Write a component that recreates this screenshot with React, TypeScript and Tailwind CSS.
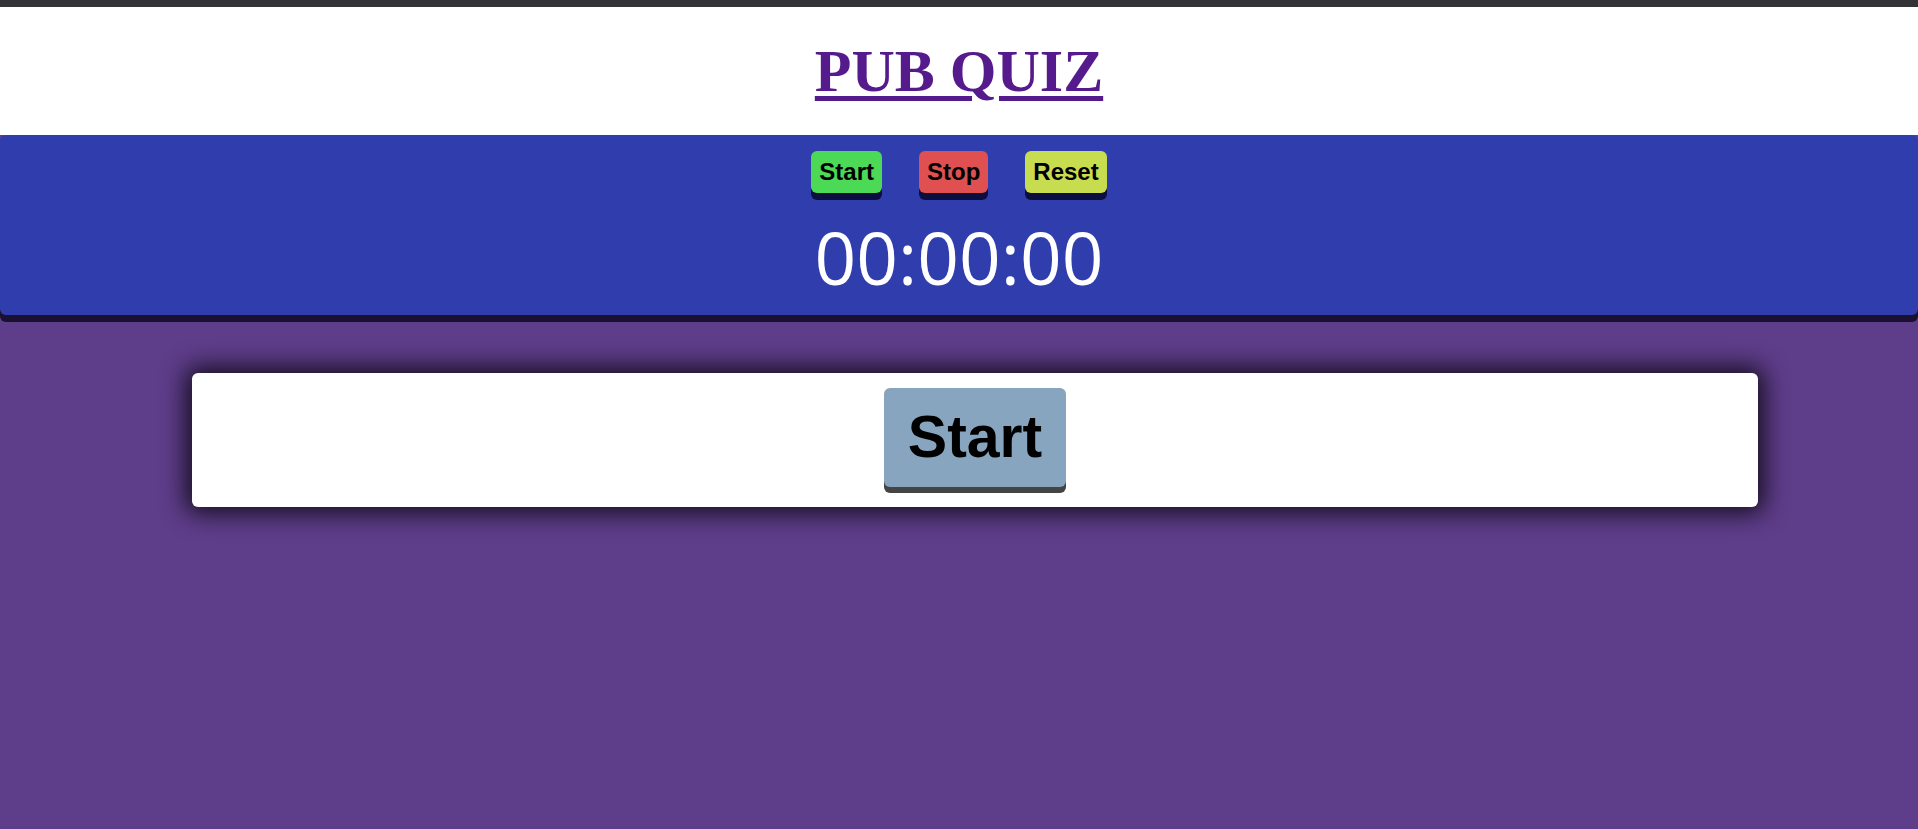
export default function App() {
  return (
    <div className="min-h-[829px] bg-[#5e3d8a] font-['Liberation_Sans',Arial,sans-serif]">
      <div className="h-[7px] bg-[#333236]" />
      <header className="h-[128px] bg-white flex items-center justify-center">
        <a
          href="#"
          className="font-['Liberation_Serif','Times_New_Roman',serif] text-[60px] font-bold text-[#551a8b] underline decoration-[5px] underline-offset-[5px] leading-none"
        >
          PUB QUIZ
        </a>
      </header>

      <section className="h-[180px] bg-[#303ead] rounded-[6px] shadow-[0_7px_0_#1a1030] flex flex-col items-center pt-[16px]">
        <div className="flex gap-[37px]">
          <button className="h-[42px] px-[8px] rounded-[6px] bg-[#4cd955] text-[24px] font-bold text-black shadow-[0_7px_0_#0c0f3d]">
            Start
          </button>
          <button className="h-[42px] px-[8px] rounded-[6px] bg-[#e05050] text-[24px] font-bold text-black shadow-[0_7px_0_#0c0f3d]">
            Stop
          </button>
          <button className="h-[42px] px-[8px] rounded-[6px] bg-[#c8dc50] text-[24px] font-bold text-black shadow-[0_7px_0_#0c0f3d]">
            Reset
          </button>
        </div>
        <div className="mt-[14px] font-['Open_Sans',sans-serif] text-[73px] leading-[100px] text-white">
          00:00:00
        </div>
      </section>

      <main className="pt-[58px]">
        <div className="ml-[10%] w-[calc(80%+32px)] h-[134px] bg-white rounded-[6px] shadow-[0_0_24px_6px_rgba(0,0,0,0.8)] flex justify-center pt-[15px]">
          <button className="h-[99px] px-[24px] rounded-[6px] bg-[#87a5be] text-[59px] font-bold text-black shadow-[0_6px_0_#444]">
            Start
          </button>
        </div>
      </main>
    </div>
  )
}
